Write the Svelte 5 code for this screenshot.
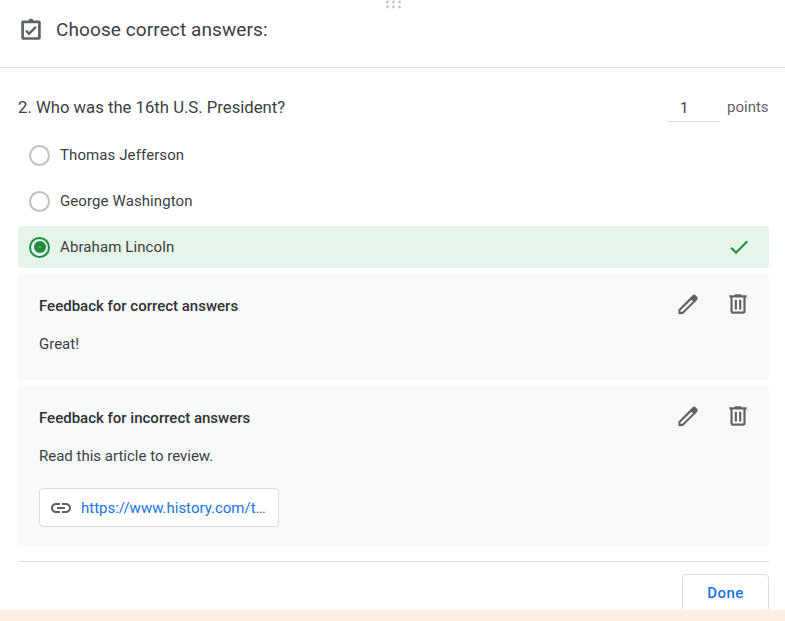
<script>
    const options = [
        { label: "Thomas Jefferson", correct: false },
        { label: "George Washington", correct: false },
        { label: "Abraham Lincoln", correct: true }
    ];
    const feedback = [
        { title: "Feedback for correct answers", text: "Great!", link: "" },
        { title: "Feedback for incorrect answers", text: "Read this article to review.", link: "https://www.history.com/topics/us-presidents/abraham-lincoln" }
    ];
</script>

<main class="page">
    <div class="handle">
        <svg width="18" height="10" viewBox="0 0 18 10">
            {#each [2, 7] as y}
                {#each [2.5, 8.5, 14.5] as x}
                    <circle cx={x} cy={y} r="1.4" fill="#c4c6c9" />
                {/each}
            {/each}
        </svg>
    </div>

    <header class="head">
        <svg class="clip" width="26" height="26" viewBox="0 0 24 24">
            <path fill="#5f6368" fill-rule="evenodd" d="M4.6 3.2h5.2C10 2.2 10.9 1.6 12 1.6s2 .6 2.2 1.6h5.2c.9 0 1.6.7 1.6 1.6v14.6c0 .9-.7 1.6-1.6 1.6H4.6c-.9 0-1.6-.7-1.6-1.6V4.800c0-.9.7-1.6 1.600-1.600zm.9 2.500v13.100h13V5.700z" />
            <path fill="#5f6368" d="M10.200 17 6.600 13.400l1.600-1.600 2 2 5.600-5.600 1.600 1.600z" />
        </svg>
        <span>Choose correct answers:</span>
    </header>

    <section class="body">
        <div class="question">
            <span class="qtext">2. Who was the 16th U.S. President?</span>
            <span class="pointsbox">1</span>
            <span class="points">points</span>
        </div>

        {#each options as opt}
            <div class="option" class:correct={opt.correct}>
                <span class="radio"></span>
                <span class="label">{opt.label}</span>
                {#if opt.correct}
                    <svg width="24" height="24" viewBox="0 0 24 24">
                        <path fill="#1e8e3e" d="M9 16.17 4.83 12l-1.42 1.41L9 19 21 7l-1.41-1.41z" />
                    </svg>
                {/if}
            </div>
        {/each}

        {#each feedback as fb}
            <div class="card" class:withlink={fb.link}>
                <div class="cardhead">
                    <span class="title">{fb.title}</span>
                    <svg width="26" height="26" viewBox="0 0 24 24">
                        <path fill="#5f6368" fill-rule="evenodd" d="M3.200 21.400V17L16.200 4a2 2 0 0 1 2.800 0l1.400 1.400a2 2 0 0 1 0 2.800L7.400 21.200zM5.200 17.800v1.600h1.400L16.600 9.400 15.200 8z" />
                    </svg>
                    <svg width="26" height="26" viewBox="0 0 24 24">
                        <path fill="#5f6368" d="M15 4V3H9v1H4v2h1v13c0 1.100.9 2 2 2h10c1.100 0 2-.9 2-2V6h1V4h-5zm2 15H7V6h10v13z" />
                        <path fill="#5f6368" d="M9 8h2v9H9zm4 0h2v9h-2z" />
                    </svg>
                </div>
                <p class="text">{fb.text}</p>
                {#if fb.link}
                    <div class="chip">
                        <svg width="24" height="24" viewBox="0 0 24 24">
                            <path fill="#5f6368" d="M17 7h-4v2h4c1.650 0 3 1.350 3 3s-1.350 3-3 3h-4v2h4c2.760 0 5-2.240 5-5s-2.240-5-5-5zm-6 8H7c-1.650 0-3-1.350-3-3s1.350-3 3-3h4V7H7c-2.760 0-5 2.240-5 5s2.240 5 5 5h4v-2zm-3-4h8v2H8z" />
                        </svg>
                        <span class="url">{fb.link}</span>
                    </div>
                {/if}
            </div>
        {/each}

        <div class="foot">
            <button type="button" class="done">Done</button>
        </div>
    </section>
    <div class="band"></div>
</main>

<style>
    :global(body) {
        margin: 0;
        background: #fff;
    }
    .page {
        position: relative;
        width: 785px;
        height: 621px;
        overflow: hidden;
        font-family: Roboto, "Liberation Sans", sans-serif;
        color: #3c4043;
    }
    .handle {
        position: absolute;
        top: 0;
        left: 385px;
        line-height: 0;
    }
    .head {
        display: flex;
        align-items: center;
        height: 68px;
        box-sizing: border-box;
        padding: 0 0 8px 18px;
        border-bottom: 1px solid #dadce0;
        font-size: 19px;
        letter-spacing: 0.1px;
    }
    .clip {
        margin-right: 12px;
    }
    .body {
        padding: 0 16px 0 18px;
    }
    .question {
        display: flex;
        align-items: center;
        height: 66px;
        box-sizing: border-box;
        padding-top: 12px;
        font-size: 16.7px;
    }
    .qtext {
        flex: 1;
    }
    .pointsbox {
        width: 52px;
        height: 26px;
        box-sizing: border-box;
        border-bottom: 1px solid #dadce0;
        padding-left: 13px;
        margin-top: 3px;
        line-height: 24px;
        font-size: 15px;
    }
    .points {
        margin-left: 8px;
        width: 42px;
        font-size: 15px;
        color: #5f6368;
        white-space: nowrap;
    }
    .option {
        display: flex;
        align-items: center;
        height: 42px;
        margin-bottom: 4px;
        padding-left: 11px;
        padding-right: 18px;
        border-radius: 4px;
        font-size: 15px;
        letter-spacing: 0.1px;
    }
    .radio {
        width: 21px;
        height: 21px;
        box-sizing: border-box;
        border: 2px solid #bdc1c6;
        border-radius: 50%;
        margin-right: 10px;
    }
    .label {
        flex: 1;
    }
    .correct {
        background: #e6f4ea;
        margin-bottom: 6px;
    }
    .correct .radio {
        position: relative;
        border-color: #1e8e3e;
    }
    .correct .radio::after {
        content: "";
        position: absolute;
        top: 2.5px;
        left: 2.5px;
        width: 12px;
        height: 12px;
        box-sizing: border-box;
        border: 5px solid #1e8e3e;
        border-radius: 50%;
        background: #5fae76;
    }
    .card {
        background: #f8f9fa;
        border-radius: 4px;
        padding: 16px 18px 27px 21px;
        margin-bottom: 6px;
    }
    .withlink {
        padding-bottom: 20px;
        margin-bottom: 14px;
    }
    .cardhead {
        display: flex;
        align-items: center;
        gap: 24px;
        height: 28px;
    }
    .title {
        flex: 1;
        font-size: 15px;
        font-weight: 500;
        color: #303134;
        padding-top: 3px;
    }
    .text {
        margin: 15px 0 0;
        font-size: 15px;
        line-height: 20px;
        padding-top: 1px;
        height: 19px;
    }
    .chip {
        display: flex;
        align-items: center;
        width: 240px;
        height: 39px;
        box-sizing: border-box;
        margin-top: 23px;
        padding: 0 9px;
        background: #fff;
        border: 1px solid #dadce0;
        border-radius: 4px;
    }
    .url {
        flex: 1;
        min-width: 0;
        margin-left: 8px;
        font-size: 15px;
        color: #1a73e8;
        white-space: nowrap;
        overflow: hidden;
        text-overflow: ellipsis;
    }
    .foot {
        display: flex;
        justify-content: flex-end;
        border-top: 1px solid #dadce0;
        padding-top: 12px;
    }
    .done {
        width: 87px;
        height: 38px;
        background: #fff;
        border: 1px solid #dadce0;
        border-radius: 4px;
        color: #1a73e8;
        font-family: inherit;
        font-size: 15px;
        font-weight: 500;
        letter-spacing: 0.5px;
    }
    .band {
        position: absolute;
        left: 0;
        right: 0;
        bottom: 0;
        height: 11px;
        background: #feefe3;
    }
</style>
